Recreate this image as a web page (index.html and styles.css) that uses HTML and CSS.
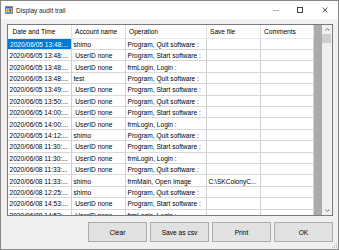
FILE: index.html
```html
<!DOCTYPE html>
<html>
<head>
<meta charset="utf-8">
<link rel="stylesheet" href="styles.css">
</head>
<body>
<div class="window">
  <div class="titlebar">
    <svg class="appicon" viewBox="0 0 8 8" width="8" height="8">
      <rect x="0.5" y="0.5" width="7" height="7" fill="#fff" stroke="#8a8a8a" stroke-width="1"/>
      <rect x="1" y="1" width="6" height="1.6" fill="#2f6bd1"/>
      <rect x="1.3" y="3" width="2.4" height="2" fill="#e8a21c"/>
      <rect x="4.2" y="3" width="2.4" height="2" fill="#d9362b"/>
      <rect x="1.3" y="5.3" width="2.4" height="1.6" fill="#3c9b3c"/>
      <rect x="4.2" y="5.3" width="2.4" height="1.6" fill="#2f6bd1"/>
    </svg>
    <span class="title">Display audit trail</span>
    <div class="controls">
      <div class="ctl min"><svg width="6" height="1" viewBox="0 0 6 1"><rect width="6" height="1" fill="#b5b5b5"/></svg></div>
      <div class="ctl max"><svg width="6" height="6" viewBox="0 0 6 6"><rect x="0.5" y="0.5" width="5" height="5" fill="none" stroke="#333" stroke-width="0.9"/></svg></div>
      <div class="ctl close"><svg width="6" height="6" viewBox="0 0 6 6"><path d="M0.5 0.5 L5.5 5.5 M5.5 0.5 L0.5 5.5" stroke="#333" stroke-width="0.8"/></svg></div>
    </div>
  </div>
  <div class="client">
    <div class="grid">
      <div class="table">
        <div class="hcell first">Date and Time</div><div class="hcell">Account name</div><div class="hcell">Operation</div><div class="hcell">Save file</div><div class="hcell">Comments</div>

        <div class="cell sel">2020/06/05 13:48:...</div><div class="cell">shimo</div><div class="cell">Program, Quit software :</div><div class="cell"></div><div class="cell"></div>
        <div class="cell">2020/06/05 13:48:...</div><div class="cell">&nbsp;UserID none</div><div class="cell">Program, Start software :</div><div class="cell"></div><div class="cell"></div>
        <div class="cell">2020/06/05 13:48:...</div><div class="cell">&nbsp;UserID none</div><div class="cell">frmLogin, Login :</div><div class="cell"></div><div class="cell"></div>
        <div class="cell">2020/06/05 13:48:...</div><div class="cell">test</div><div class="cell">Program, Quit software :</div><div class="cell"></div><div class="cell"></div>
        <div class="cell">2020/06/05 13:49:...</div><div class="cell">&nbsp;UserID none</div><div class="cell">Program, Start software :</div><div class="cell"></div><div class="cell"></div>
        <div class="cell">2020/06/05 13:50:...</div><div class="cell">&nbsp;UserID none</div><div class="cell">Program, Quit software :</div><div class="cell"></div><div class="cell"></div>
        <div class="cell">2020/06/05 14:00:...</div><div class="cell">&nbsp;UserID none</div><div class="cell">Program, Start software :</div><div class="cell"></div><div class="cell"></div>
        <div class="cell">2020/06/05 14:00:...</div><div class="cell">&nbsp;UserID none</div><div class="cell">frmLogin, Login :</div><div class="cell"></div><div class="cell"></div>
        <div class="cell">2020/06/05 14:12:...</div><div class="cell">shimo</div><div class="cell">Program, Quit software :</div><div class="cell"></div><div class="cell"></div>
        <div class="cell">2020/06/08 11:30:...</div><div class="cell">&nbsp;UserID none</div><div class="cell">Program, Start software :</div><div class="cell"></div><div class="cell"></div>
        <div class="cell">2020/06/08 11:30:...</div><div class="cell">&nbsp;UserID none</div><div class="cell">frmLogin, Login :</div><div class="cell"></div><div class="cell"></div>
        <div class="cell">2020/06/08 11:33:...</div><div class="cell">&nbsp;UserID none</div><div class="cell">Program, Quit software :</div><div class="cell"></div><div class="cell"></div>
        <div class="cell">2020/06/08 11:33:...</div><div class="cell">shimo</div><div class="cell">frmMain, Open Image</div><div class="cell">C:\SKColonyC...</div><div class="cell"></div>
        <div class="cell">2020/06/08 12:25:...</div><div class="cell">shimo</div><div class="cell">Program, Quit software :</div><div class="cell"></div><div class="cell"></div>
        <div class="cell">2020/06/08 14:53:...</div><div class="cell">&nbsp;UserID none</div><div class="cell">Program, Start software :</div><div class="cell"></div><div class="cell"></div>
        <div class="cell">2020/06/08 14:53:...</div><div class="cell">&nbsp;UserID none</div><div class="cell">frmLogin, Login :</div><div class="cell"></div><div class="cell"></div>
      </div>
      <div class="band"></div>
      <div class="vscroll">
        <div class="arrow"><svg width="5" height="3" viewBox="0 0 5 3"><polyline points="0.5,2.6 2.5,0.6 4.5,2.6" fill="none" stroke="#606060" stroke-width="0.9"/></svg></div>
        <div class="thumb"></div>
        <div class="track"></div>
        <div class="arrow"><svg width="5" height="3" viewBox="0 0 5 3"><polyline points="0.5,0.4 2.5,2.4 4.5,0.4" fill="none" stroke="#606060" stroke-width="0.9"/></svg></div>
      </div>
    </div>
    <div class="buttons">
      <div class="btn">Clear</div>
      <div class="btn">Save as csv</div>
      <div class="btn">Print</div>
      <div class="btn">OK</div>
    </div>
  </div>
  <svg class="grip" width="5" height="5" viewBox="0 0 5 5">
    <rect x="4" y="0" width="1" height="1" fill="#b8b8b8"/>
    <rect x="2" y="2" width="1" height="1" fill="#b8b8b8"/>
    <rect x="4" y="2" width="1" height="1" fill="#b8b8b8"/>
    <rect x="0" y="4" width="1" height="1" fill="#b8b8b8"/>
    <rect x="2" y="4" width="1" height="1" fill="#b8b8b8"/>
    <rect x="4" y="4" width="1" height="1" fill="#b8b8b8"/>
  </svg>
</div>
</body>
</html>
```

FILE: styles.css
```css
body {
  margin: 0;
}

.window {
  position: relative;
  width: 339px;
  height: 250px;
  box-sizing: border-box;
  border: 1px solid #868686;
  background: #f0f0f0;
  display: flex;
  flex-direction: column;
  font-family: "Liberation Sans", Arial, sans-serif;
  font-size: 6.6px;
  color: #000;
}

.titlebar {
  height: 18px;
  flex: none;
  background: #fff;
  display: flex;
  align-items: center;
}

.appicon {
  margin-left: 4px;
  margin-right: 3px;
  flex: none;
}

.title {
  font-size: 6.5px;
  color: #1e1e1e;
}

.controls {
  margin-left: auto;
  display: flex;
  height: 100%;
}

.ctl {
  display: flex;
  align-items: center;
  justify-content: center;
  width: 24px;
}

.ctl.close {
  width: 26px;
}

.client {
  flex: 1;
  padding: 5px 5px 0 6px;
  display: flex;
  flex-direction: column;
}

.grid {
  height: 192px;
  box-sizing: border-box;
  border: 1px solid #7a7a7a;
  display: flex;
  background: #ababab;
}

.table {
  width: 306px;
  flex: none;
  overflow: hidden;
  background: #fff;
  display: grid;
  grid-template-columns: 64px 54px 81px 54px 53px;
  grid-template-rows: 13.7px;
  grid-auto-rows: 11.4px;
  align-content: start;
}

.hcell,
.cell {
  box-sizing: border-box;
  border-right: 1px solid #d0d0d0;
  white-space: nowrap;
  overflow: hidden;
  display: flex;
  align-items: center;
}

.hcell {
  padding-left: 3px;
  border-bottom: 1px solid #e6e6e6;
  border-right-color: #e0e0e0;
  background: #fff;
}

.hcell.first {
  padding-left: 4.5px;
}

.cell {
  padding-left: 1.5px;
  padding-top: 1px;
  border-bottom: 1px solid #d8d8d8;
}

.cell.sel {
  background: #0078d7;
  color: #fff;
  padding-left: 2px;
}

.band {
  width: 8px;
  flex: none;
}

.vscroll {
  width: 10px;
  flex: none;
  background: #f0f0f0;
  display: flex;
  flex-direction: column;
}

.arrow {
  height: 9px;
  display: flex;
  align-items: center;
  justify-content: center;
}

.thumb {
  height: 9px;
  margin-right: 1px;
  background: #cdcdcd;
}

.track {
  flex: 1;
}

.buttons {
  display: flex;
  justify-content: flex-end;
  gap: 3px;
  margin-top: 6px;
}

.btn {
  width: 59px;
  height: 20px;
  box-sizing: border-box;
  border: 1px solid #adadad;
  background: #e1e1e1;
  display: flex;
  align-items: center;
  justify-content: center;
}

.grip {
  position: absolute;
  right: 1px;
  bottom: 1px;
}
```
